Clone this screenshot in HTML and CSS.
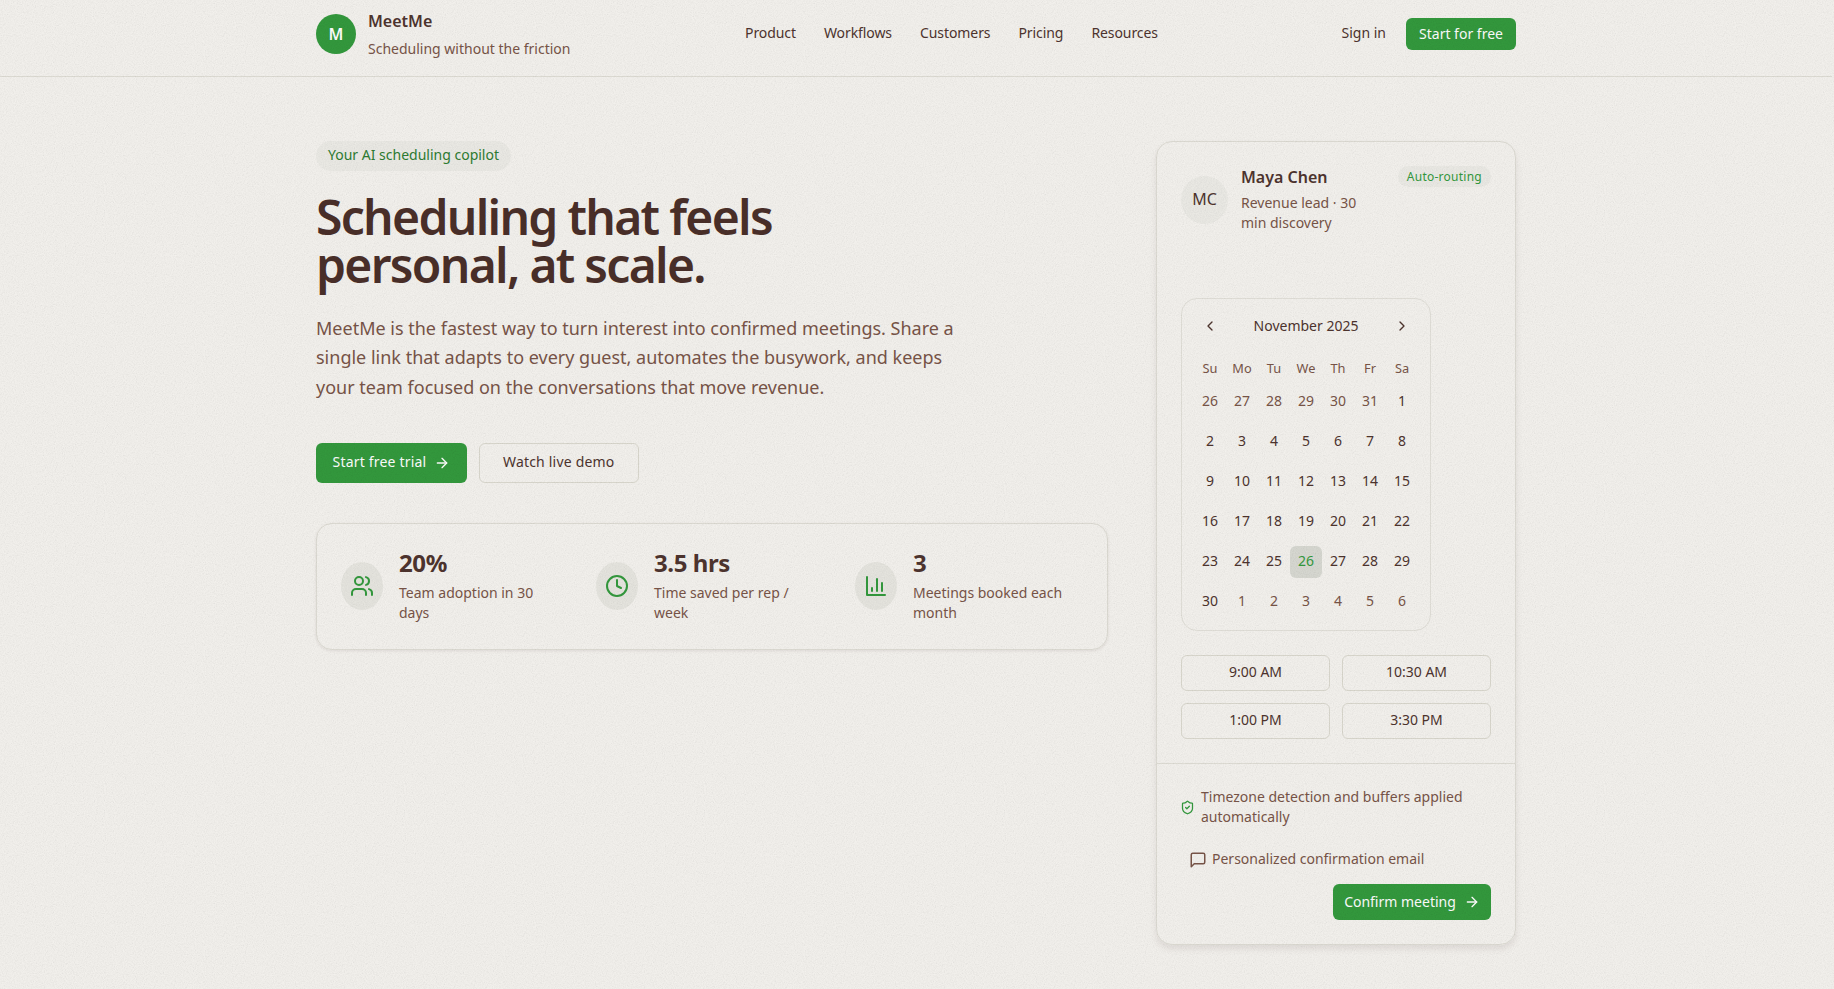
FILE: index.html
```html
<!DOCTYPE html>
<html lang="en">
<head>
    <meta charset="UTF-8">
    <meta name="viewport" content="width=device-width, initial-scale=1.0">
    <title>MeetMe</title>
    <link rel="stylesheet" href="styles.css">
</head>
<body>
    <header class="site-header">
        <div class="header-inner">
            <div class="brand">
                <div class="brand-mark">M</div>
                <div>
                    <div class="brand-name">MeetMe</div>
                    <div class="brand-tag">Scheduling without the friction</div>
                </div>
            </div>
            <nav class="nav">
                <a>Product</a>
                <a>Workflows</a>
                <a>Customers</a>
                <a>Pricing</a>
                <a>Resources</a>
            </nav>
            <div class="header-actions">
                <a class="sign-in">Sign in</a>
                <button class="btn btn-primary btn-small">Start for free</button>
            </div>
        </div>
    </header>

    <main class="hero">
        <section class="hero-left">
            <span class="pill">Your AI scheduling copilot</span>
            <h1>Scheduling that feels<br>personal, at scale.</h1>
            <p class="lead">MeetMe is the fastest way to turn interest into confirmed meetings. Share a single link that adapts to every guest, automates the busywork, and keeps your team focused on the conversations that move revenue.</p>
            <div class="cta-row">
                <button class="btn btn-primary btn-large">Start free trial
                    <svg class="icon-arrow" viewBox="0 0 24 24"><path d="M5 12h14"/><path d="m12 5 7 7-7 7"/></svg>
                </button>
                <button class="btn btn-outline btn-large">Watch live demo</button>
            </div>
            <div class="stats">
                <div class="stat">
                    <div class="stat-icon">
                        <svg viewBox="0 0 24 24"><path d="M16 21v-2a4 4 0 0 0-4-4H6a4 4 0 0 0-4 4v2"/><circle cx="9" cy="7" r="4"/><path d="M22 21v-2a4 4 0 0 0-3-3.87"/><path d="M16 3.13a4 4 0 0 1 0 7.75"/></svg>
                    </div>
                    <div>
                        <div class="stat-value">20%</div>
                        <div class="stat-label">Team adoption in 30 days</div>
                    </div>
                </div>
                <div class="stat">
                    <div class="stat-icon">
                        <svg viewBox="0 0 24 24"><circle cx="12" cy="12" r="10"/><path d="M12 6v6l4 2"/></svg>
                    </div>
                    <div>
                        <div class="stat-value">3.5 hrs</div>
                        <div class="stat-label">Time saved per rep / week</div>
                    </div>
                </div>
                <div class="stat">
                    <div class="stat-icon">
                        <svg viewBox="0 0 24 24"><path d="M3 3v18h18"/><path d="M18 17V9"/><path d="M13 17V5"/><path d="M8 17v-3"/></svg>
                    </div>
                    <div>
                        <div class="stat-value">3</div>
                        <div class="stat-label">Meetings booked each month</div>
                    </div>
                </div>
            </div>
        </section>

        <aside class="booking">
            <div class="booking-top">
                <div class="host">
                    <div class="avatar">MC</div>
                    <div class="host-info">
                        <div class="host-name">Maya Chen</div>
                        <div class="host-role">Revenue lead · 30 min discovery</div>
                    </div>
                    <span class="badge">Auto-routing</span>
                </div>

                <div class="calendar">
                    <div class="cal-head">
                        <svg class="cal-arrow" viewBox="0 0 24 24"><path d="m15 18-6-6 6-6"/></svg>
                        <span>November 2025</span>
                        <svg class="cal-arrow" viewBox="0 0 24 24"><path d="m9 18 6-6-6-6"/></svg>
                    </div>
                    <div class="cal-weekdays">
                        <span>Su</span><span>Mo</span><span>Tu</span><span>We</span><span>Th</span><span>Fr</span><span>Sa</span>
                    </div>
                    <div class="cal-days">
                        <span class="muted">26</span><span class="muted">27</span><span class="muted">28</span><span class="muted">29</span><span class="muted">30</span><span class="muted">31</span><span>1</span>
                        <span>2</span><span>3</span><span>4</span><span>5</span><span>6</span><span>7</span><span>8</span>
                        <span>9</span><span>10</span><span>11</span><span>12</span><span>13</span><span>14</span><span>15</span>
                        <span>16</span><span>17</span><span>18</span><span>19</span><span>20</span><span>21</span><span>22</span>
                        <span>23</span><span>24</span><span>25</span><span class="selected">26</span><span>27</span><span>28</span><span>29</span>
                        <span>30</span><span class="muted">1</span><span class="muted">2</span><span class="muted">3</span><span class="muted">4</span><span class="muted">5</span><span class="muted">6</span>
                    </div>
                </div>

                <div class="slots">
                    <button class="slot">9:00 AM</button>
                    <button class="slot">10:30 AM</button>
                    <button class="slot">1:00 PM</button>
                    <button class="slot">3:30 PM</button>
                </div>
            </div>

            <div class="booking-foot">
                <div class="note">
                    <svg class="icon-shield" viewBox="0 0 24 24"><path d="M20 13c0 5-3.500 7.500-7.660 8.950a1 1 0 0 1-.670-.010C7.500 20.500 4 18 4 13V6a1 1 0 0 1 1-1c2 0 4.500-1.200 6.240-2.720a1.170 1.170 0 0 1 1.520 0C14.510 3.810 17 5 19 5a1 1 0 0 1 1 1z"/><path d="m9 12 2 2 4-4"/></svg>
                    <span>Timezone detection and buffers applied automatically</span>
                </div>
                <div class="note note-mail">
                    <svg class="icon-chat" viewBox="0 0 24 24"><path d="M21 15a2 2 0 0 1-2 2H7l-4 4V5a2 2 0 0 1 2-2h14a2 2 0 0 1 2 2z"/></svg>
                    <span>Personalized confirmation email</span>
                </div>
                <button class="btn btn-primary btn-confirm">Confirm meeting
                    <svg class="icon-arrow" viewBox="0 0 24 24"><path d="M5 12h14"/><path d="m12 5 7 7-7 7"/></svg>
                </button>
            </div>
        </aside>
    </main>

    <div class="grain"></div>
</body>
</html>
```

FILE: styles.css
```css
* {
    box-sizing: border-box;
}

body {
    margin: 0;
    padding-right: 2px;
    min-height: 989px;
    background-color: #f5f3ef;
    color: #4e342e;
    font-family: "Noto Sans", sans-serif;
    font-size: 14px;
    line-height: 20px;
}

svg {
    fill: none;
    stroke: currentColor;
    stroke-width: 2;
    stroke-linecap: round;
    stroke-linejoin: round;
    flex-shrink: 0;
}

.grain {
    position: fixed;
    inset: 0;
    pointer-events: none;
    opacity: 0.22;
    mix-blend-mode: multiply;
    background-image: url("data:image/svg+xml,%3Csvg xmlns='http://www.w3.org/2000/svg' width='300' height='300'%3E%3Cfilter id='n'%3E%3CfeTurbulence type='fractalNoise' baseFrequency='0.9' numOctaves='3' stitchTiles='stitch'/%3E%3CfeColorMatrix type='saturate' values='0'/%3E%3C/filter%3E%3Crect width='300' height='300' filter='url(%23n)'/%3E%3C/svg%3E");
}

.site-header {
    height: 77px;
    border-bottom: 1px solid #e0ded6;
}

.header-inner {
    width: 1200px;
    height: 68px;
    margin: 0 auto;
    display: grid;
    grid-template-columns: 429px 1fr auto;
    align-items: center;
}

.brand {
    display: flex;
    align-items: center;
    gap: 12px;
}

.brand-mark {
    width: 40px;
    height: 40px;
    border-radius: 50%;
    background: #339a3d;
    color: #fff;
    display: flex;
    align-items: center;
    justify-content: center;
    font-size: 16px;
    font-weight: 600;
}

.brand-name {
    font-size: 16px;
    font-weight: 600;
    line-height: 24px;
}

.brand-tag {
    margin-top: 6px;
    color: #795548;
}

.nav {
    display: flex;
    gap: 28px;
    padding-bottom: 2px;
    letter-spacing: -0.08px;
}

.header-actions {
    display: flex;
    align-items: center;
    gap: 20px;
}

.sign-in {
    padding-bottom: 2px;
}

.btn {
    border: 0;
    border-radius: 6px;
    font-family: inherit;
    font-size: 14px;
    padding-bottom: 2px;
    display: inline-flex;
    align-items: center;
    justify-content: center;
    gap: 8px;
    cursor: pointer;
}

.btn-primary {
    background: #339a3d;
    color: #fff;
}

.btn-outline {
    background: transparent;
    border: 1px solid #dbd9cf;
    color: #4e342e;
}

.btn-small {
    width: 110px;
    height: 32px;
}

.btn-large {
    height: 40px;
    padding: 0 16.5px 2px;
    letter-spacing: 0.2px;
}

.btn-outline.btn-large {
    padding: 0 23px 2px;
}

.icon-arrow {
    width: 16px;
    height: 16px;
    margin-top: 2px;
}

.hero {
    width: 1200px;
    margin: 0 auto;
    padding-top: 64px;
    display: grid;
    grid-template-columns: 792px 360px;
    gap: 48px;
    align-items: start;
}

.pill {
    display: inline-block;
    padding: 4px 12px 6px;
    height: 30px;
    border-radius: 15px;
    background: #edece7;
    color: #2e7d32;
}

h1 {
    margin: 22px 0 0;
    font-size: 48px;
    line-height: 48px;
    font-weight: 600;
    letter-spacing: -1.7px;
    color: #4a2f29;
}

.lead {
    width: 650px;
    margin: 25px 0 0;
    font-size: 18px;
    line-height: 29.25px;
    color: #795548;
}

.cta-row {
    display: flex;
    gap: 12px;
    margin-top: 41px;
}

.stats {
    margin-top: 40px;
    height: 127px;
    padding: 0 24px 2px;
    border: 1px solid #dfddd5;
    border-radius: 16px;
    box-shadow: 0 1px 3px rgba(78, 52, 46, 0.1);
    display: grid;
    grid-template-columns: 231px 235px 1fr;
    gap: 24px;
    align-items: center;
}

.stat {
    display: flex;
    align-items: center;
    gap: 16px;
}

.stat-icon {
    width: 42px;
    height: 48px;
    margin-top: 2px;
    border-radius: 50%;
    background: #e8e7e1;
    color: #339a3d;
    display: flex;
    align-items: center;
    justify-content: center;
    flex-shrink: 0;
}

.stat-icon svg {
    width: 24px;
    height: 24px;
}

.stat-value {
    font-size: 24px;
    line-height: 32px;
    font-weight: 700;
    letter-spacing: -0.4px;
}

.stat-label {
    margin-top: 4px;
    max-width: 155px;
    color: #795548;
}

.booking {
    height: 804px;
    border: 1px solid #dfddd5;
    border-radius: 16px;
    box-shadow: 0 4px 6px rgba(78, 52, 46, 0.1);
}

.booking-top {
    padding: 24px 24px 0;
    height: 622px;
    border-bottom: 1px solid #e0ded6;
}

.host {
    display: flex;
    align-items: flex-start;
    height: 132px;
}

.avatar {
    width: 47px;
    height: 48px;
    margin-top: 10px;
    padding-bottom: 2px;
    border-radius: 50%;
    background: #edece7;
    display: flex;
    align-items: center;
    justify-content: center;
    font-size: 16px;
    flex-shrink: 0;
}

.host-info {
    margin-left: 13px;
    margin-top: -1px;
    width: 130px;
}

.host-name {
    font-size: 16px;
    font-weight: 600;
    line-height: 24px;
}

.host-role {
    margin-top: 4px;
    color: #795548;
}

.badge {
    margin-left: auto;
    height: 21px;
    padding: 0 9px;
    border-radius: 11px;
    background: #edece7;
    color: #339a3d;
    font-size: 12px;
    line-height: 22px;
    letter-spacing: 0.25px;
}

.calendar {
    width: 250px;
    height: 333px;
    padding: 13px 12px 12px;
    border: 1px solid #e3e1da;
    border-radius: 16px;
}

.cal-head {
    display: flex;
    align-items: center;
    justify-content: space-between;
    height: 28px;
    padding: 0 8px;
}

.cal-arrow {
    width: 16px;
    height: 16px;
}

.cal-weekdays,
.cal-days {
    display: grid;
    grid-template-columns: repeat(7, 32px);
    text-align: center;
}

.cal-weekdays {
    margin-top: 18px;
    color: #795548;
    font-size: 12.8px;
}

.cal-days {
    margin-top: 8px;
    grid-auto-rows: 32px;
    row-gap: 8px;
}

.cal-days span {
    padding-bottom: 2px;
    display: flex;
    align-items: center;
    justify-content: center;
    border-radius: 6px;
}

.cal-days .muted {
    color: #795548;
}

.cal-days .selected {
    background: #d9dad3;
    color: #339a3d;
}

.slots {
    display: grid;
    grid-template-columns: 1fr 1fr;
    gap: 12px;
    margin-top: 24px;
}

.slot {
    height: 36px;
    padding: 0 0 4px;
    border: 1px solid #dbd9cf;
    border-radius: 6px;
    background: transparent;
    font-family: inherit;
    font-size: 14px;
    color: #4e342e;
}

.booking-foot {
    padding: 23px 24px 24px;
    color: #795548;
}

.note {
    display: flex;
    align-items: center;
    gap: 6px;
}

.note-mail {
    margin-top: 22px;
    padding-left: 7px;
    gap: 4px;
}

.icon-shield {
    width: 15px;
    height: 15px;
    margin-left: -1px;
    color: #339a3d;
}

.icon-chat {
    width: 20px;
    height: 18px;
    margin-top: 2px;
}

.btn-confirm {
    display: flex;
    margin: 15px 0 0 auto;
    padding-bottom: 3px;
    width: 158px;
    height: 36px;
}
```
